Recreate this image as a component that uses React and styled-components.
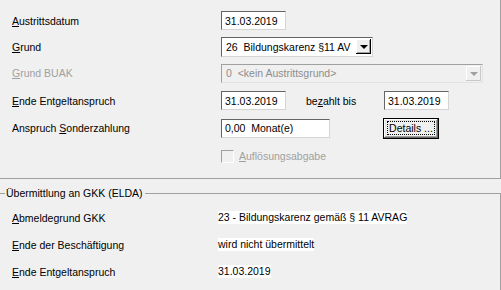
import React from 'react';
import styled, { createGlobalStyle } from 'styled-components';

const GlobalStyle = createGlobalStyle`
    html, body {
        margin: 0;
        padding: 0;
        background: #f0f0f0;
    }
    body {
        font-family: 'Liberation Sans', Arial, sans-serif;
        font-size: 10.5px;
        color: #000;
    }
`;

const Root = styled.div`
    width: 501px;
    height: 290px;
    overflow: hidden;
    background: #f0f0f0;
`;

const TopPanel = styled.section`
    border-right: 1px solid #a0a0a0;
    border-bottom: 1px solid #a0a0a0;
    padding: 7px 0 8px 0;
`;

const Row = styled.div`
    height: ${p => p.$h}px;
    display: flex;
    align-items: center;
`;

const Label = styled.label`
    width: 221px;
    padding-left: 12px;
    box-sizing: border-box;
    flex-shrink: 0;
    color: ${p => (p.$disabled ? '#a0a0a0' : '#000')};
`;

const TextBox = styled.div`
    width: ${p => p.$w}px;
    height: 19px;
    box-sizing: border-box;
    background: #fff;
    border: 1px solid;
    border-color: #646464 #d4d4d4 #d4d4d4 #646464;
    padding: 0 3px;
    display: flex;
    align-items: center;
    white-space: pre;
    flex-shrink: 0;
`;

const Select = styled.div`
    width: ${p => p.$w}px;
    height: ${p => p.$h}px;
    box-sizing: border-box;
    background: ${p => (p.$disabled ? '#f0f0f0' : '#fff')};
    color: ${p => (p.$disabled ? '#8d8d8d' : '#000')};
    border: 1px solid;
    border-color: ${p => (p.$disabled ? '#a0a0a0 #e3e3e3 #e3e3e3 #a0a0a0' : '#646464 #d4d4d4 #d4d4d4 #646464')};
    padding: 0 1px 0 4px;
    display: flex;
    align-items: center;
    white-space: pre;
    flex-shrink: 0;
`;

const SelectText = styled.span`
    flex: 1;
    overflow: hidden;
`;

const DropButton = styled.span`
    width: 15px;
    height: 15px;
    box-sizing: border-box;
    flex-shrink: 0;
    background: #f0f0f0;
    box-shadow: ${p => (p.$disabled
        ? 'inset -1px -1px #c8c8c8, inset 1px 1px #fff'
        : 'inset -1px -1px #000, inset 1px 1px #fff, inset -2px -2px #a0a0a0')};
    display: flex;
    align-items: center;
    justify-content: center;
`;

const Arrow = styled.span`
    width: 0;
    height: 0;
    border-left: 4px solid transparent;
    border-right: 4px solid transparent;
    border-top: 4px solid ${p => (p.$disabled ? '#a0a0a0' : '#000')};
    margin-top: 1px;
`;

const InlineLabel = styled.span`
    margin-left: 20px;
    width: 78px;
    flex-shrink: 0;
`;

const PushButton = styled.button`
    margin-left: 53px;
    width: 56px;
    height: 21px;
    padding: 0;
    font: inherit;
    color: #000;
    background: #f0f0f0;
    border: 1px solid #000;
    box-shadow: inset -1px -1px #696969, inset 1px 1px #fff, inset -2px -2px #a0a0a0, inset 2px 2px #e3e3e3;
    display: flex;
    align-items: center;
    justify-content: center;
`;

const FocusRect = styled.span`
    border: 1px dotted #000;
    padding: 0 1px;
    line-height: 12px;
`;

const CheckRow = styled.div`
    margin-left: 221px;
    display: flex;
    align-items: center;
    color: #a0a0a0;
`;

const CheckBox = styled.span`
    width: 13px;
    height: 13px;
    box-sizing: border-box;
    border: 1px solid;
    border-color: #a0a0a0 #fff #fff #a0a0a0;
    background: #f0f0f0;
    margin-right: 5px;
`;

const Group = styled.fieldset`
    margin: 8px 0 0 0;
    padding: 5px 0 0 0;
    border: none;
    border-top: 1px solid #a0a0a0;
    border-right: 1px solid #a0a0a0;
    height: 120px;
`;

const Legend = styled.legend`
    margin-left: 5px;
    padding: 0 2px 0 1px;
`;

const InfoRow = styled.div`
    height: 27px;
    display: flex;
    align-items: center;
`;

const InfoLabel = styled.span`
    width: 218px;
    padding-left: 12px;
    box-sizing: border-box;
    flex-shrink: 0;
`;

const Value = styled.span`
    background: #fff;
    line-height: 13px;
`;

function App() {
    return (
        <Root>
            <GlobalStyle />
            <TopPanel>
                <Row $h={27}>
                    <Label><u>A</u>ustrittsdatum</Label>
                    <TextBox $w={65}>31.03.2019</TextBox>
                </Row>
                <Row $h={25}>
                    <Label><u>G</u>rund</Label>
                    <Select $w={152} $h={20}>
                        <SelectText>26  Bildungskarenz §11 AV</SelectText>
                        <DropButton><Arrow /></DropButton>
                    </Select>
                </Row>
                <Row $h={28}>
                    <Label $disabled><u>G</u>rund BUAK</Label>
                    <Select $w={262} $h={19} $disabled>
                        <SelectText>0  &lt;kein Austrittsgrund&gt;</SelectText>
                        <DropButton $disabled><Arrow $disabled /></DropButton>
                    </Select>
                </Row>
                <Row $h={27}>
                    <Label><u>E</u>nde Entgeltanspruch</Label>
                    <TextBox $w={65}>31.03.2019</TextBox>
                    <InlineLabel>be<u>z</u>ahlt bis</InlineLabel>
                    <TextBox $w={65}>31.03.2019</TextBox>
                </Row>
                <Row $h={28}>
                    <Label>Anspruch <u>S</u>onderzahlung</Label>
                    <TextBox $w={109}>0,00  Monat(e)</TextBox>
                    <PushButton><FocusRect>Details ...</FocusRect></PushButton>
                </Row>
                <Row $h={28}>
                    <CheckRow>
                        <CheckBox />
                        <span><u>A</u>uflösungsabgabe</span>
                    </CheckRow>
                </Row>
            </TopPanel>
            <Group>
                <Legend>Übermittlung an GKK (ELDA)</Legend>
                <InfoRow>
                    <InfoLabel><u>A</u>bmeldegrund GKK</InfoLabel>
                    <Value>23 - Bildungskarenz gemäß § 11 AVRAG</Value>
                </InfoRow>
                <InfoRow>
                    <InfoLabel><u>E</u>nde der Beschäftigung</InfoLabel>
                    <Value>wird nicht übermittelt</Value>
                </InfoRow>
                <InfoRow>
                    <InfoLabel><u>E</u>nde Entgeltanspruch</InfoLabel>
                    <Value>31.03.2019</Value>
                </InfoRow>
            </Group>
        </Root>
    );
}

export default App;
